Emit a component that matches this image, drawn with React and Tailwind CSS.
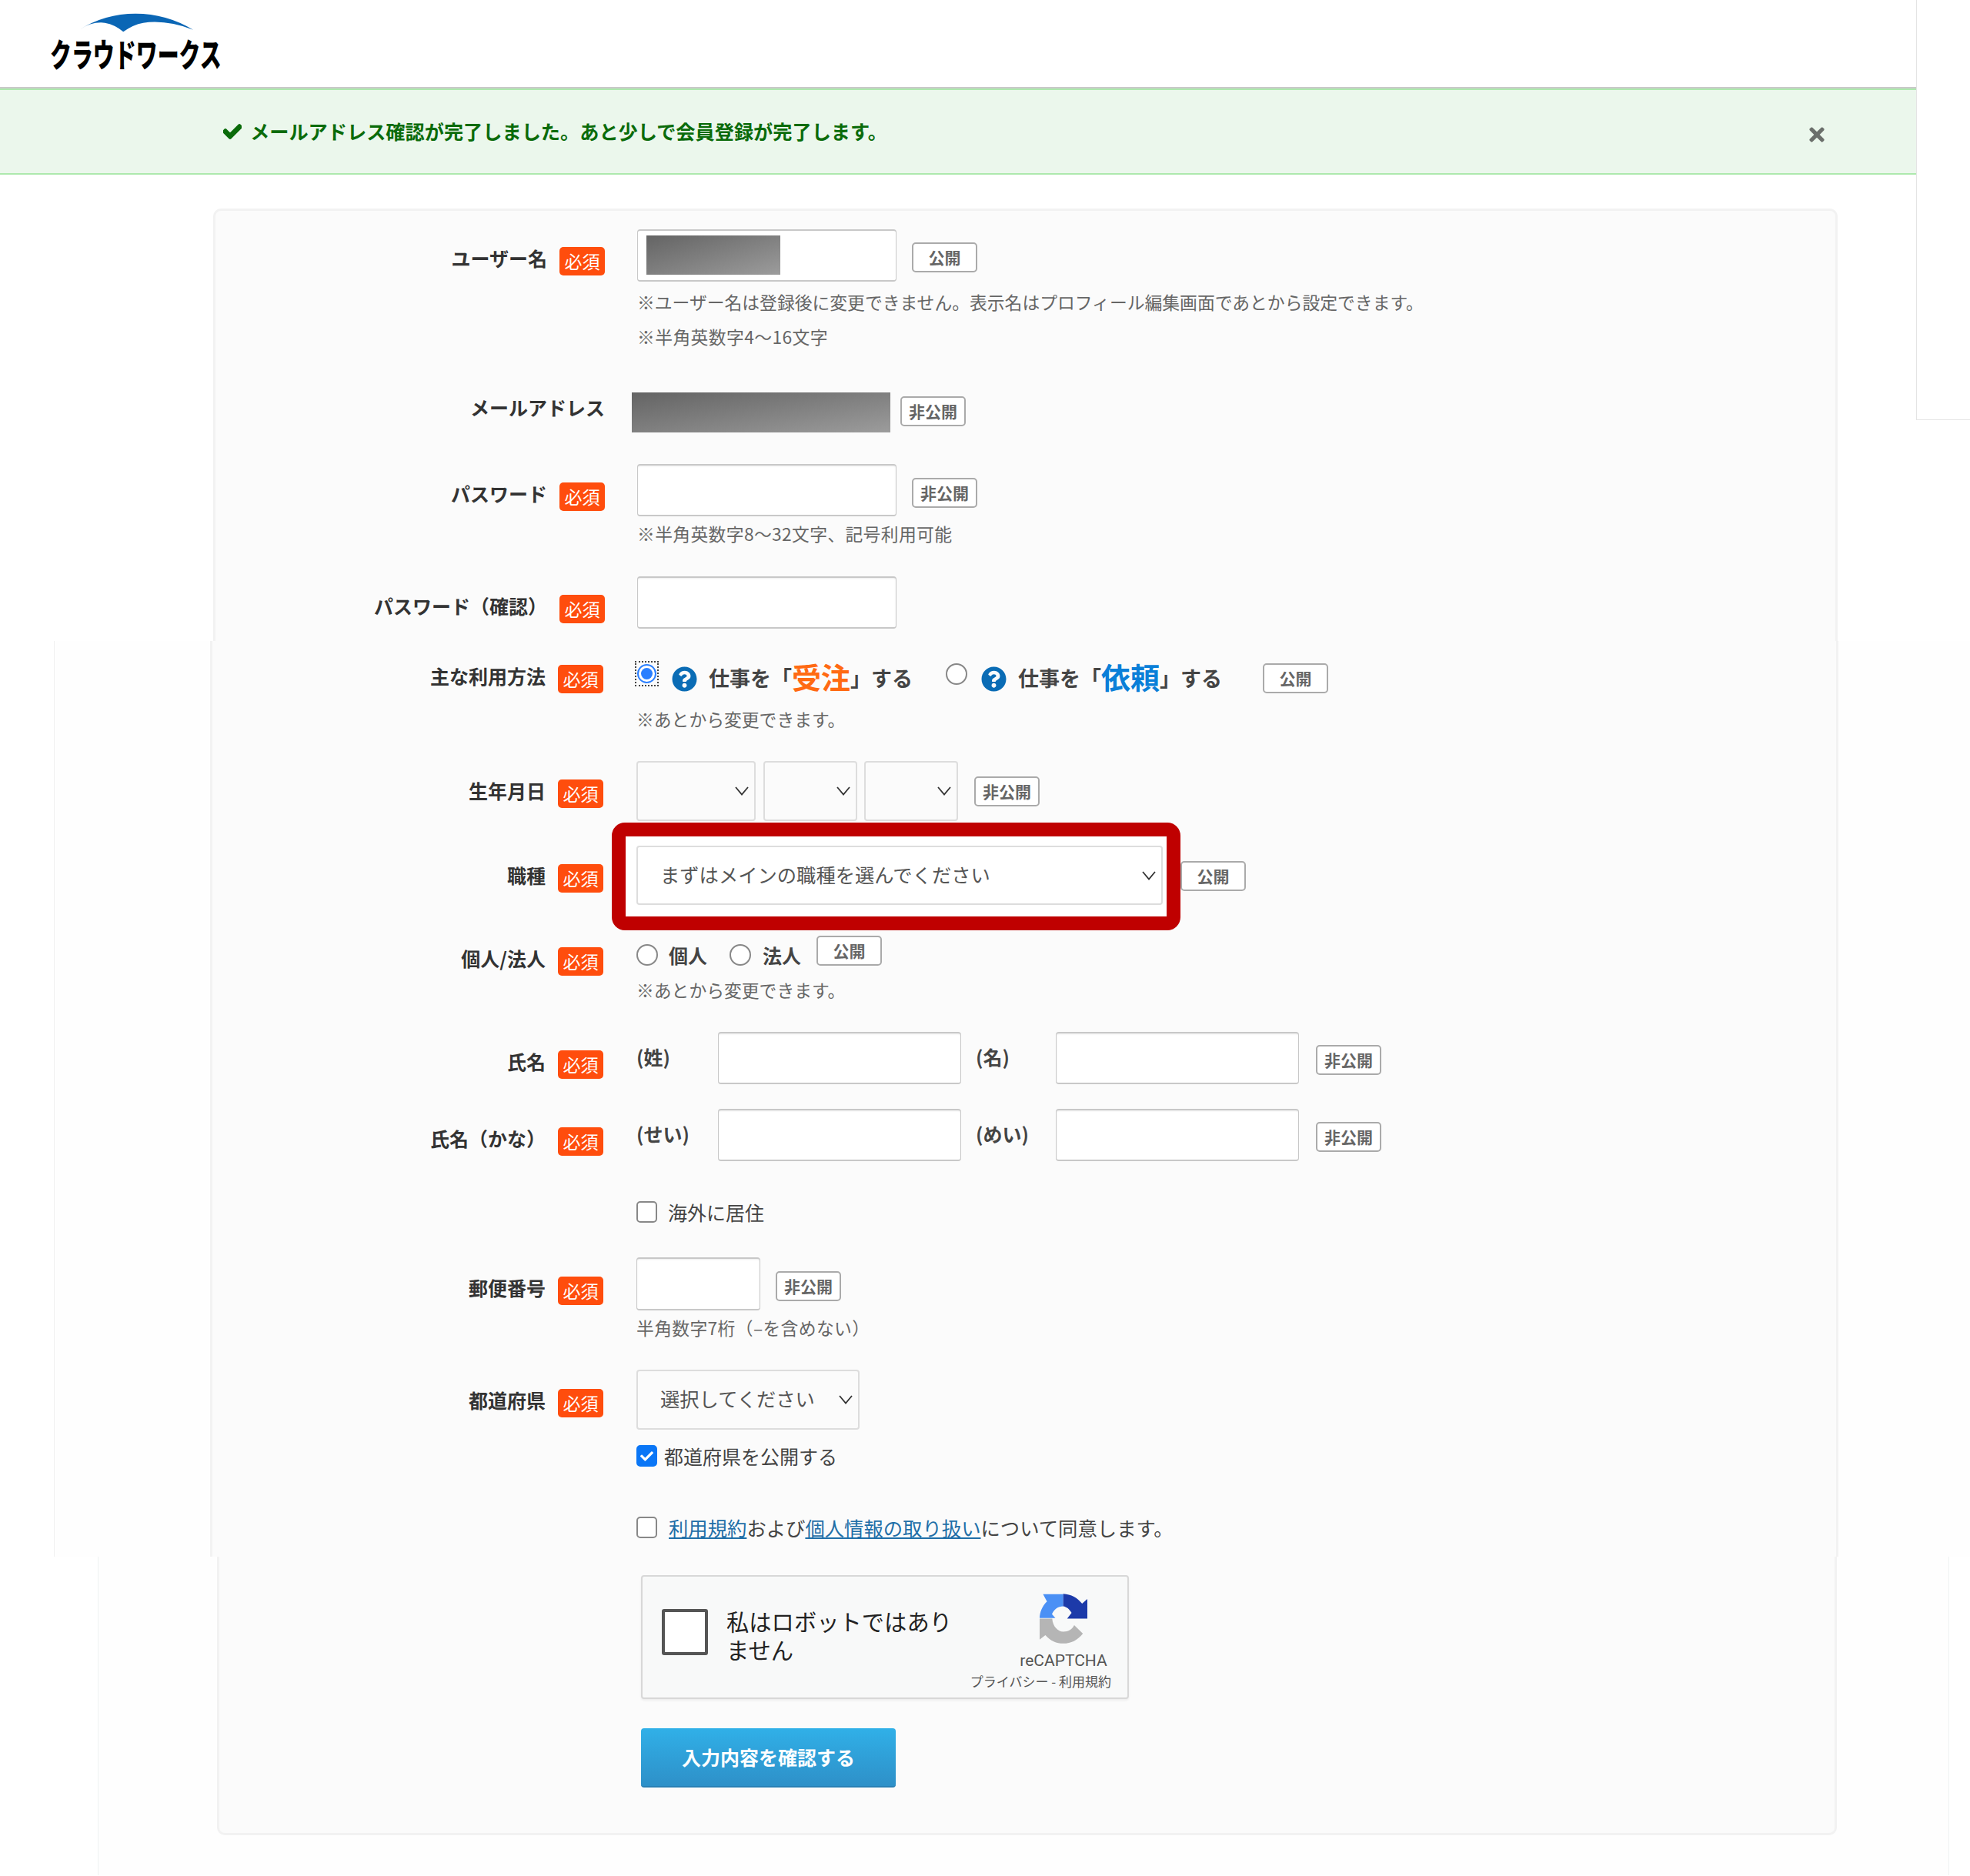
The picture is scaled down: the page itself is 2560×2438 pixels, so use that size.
import React from 'react';
import { FaCheck, FaTimes, FaQuestionCircle } from 'react-icons/fa';

const Badge = () => (
    <span className="flex h-[37px] w-[59px] shrink-0 items-center justify-center rounded-[5px] bg-[#ff4d0d] text-[23px] text-white">
        必須
    </span>
);

const Row = ({ label, required = true, labelTop = '', col = 'w-[508px] mr-[43px]', className = '', children }) => (
    <div className={`flex items-start ${className}`}>
        <div className={`flex shrink-0 items-start justify-end gap-[16px] ${col} ${labelTop}`}>
            {label && <span className="-mt-[4px] whitespace-nowrap text-[25px] font-bold leading-[37px] text-[#333]">{label}</span>}
            {required && <Badge />}
        </div>
        {children}
    </div>
);

const Visibility = ({ text = '非公開', className = '' }) => (
    <span className={`flex h-[39px] w-[85px] shrink-0 items-center justify-center rounded-[5px] border-2 border-[#aaa] bg-white text-[21px] font-bold text-[#666] ${className}`}>
        {text}
    </span>
);

const Note = ({ children, className = '' }) => (
    <p className={`whitespace-nowrap pb-[3px] text-[22.8px] leading-[42px] text-[#666] ${className}`}>{children}</p>
);

const TextBox = ({ className = '' }) => (
    <input
        type="text"
        className={`h-[68px] rounded-[4px] border border-y-2 border-[#c8c8c8] bg-white shadow-[inset_0_1px_2px_rgba(0,0,0,0.08)] ${className}`}
    />
);

const Chevron = () => (
    <svg width="18" height="12" viewBox="0 0 18 12" className="shrink-0" fill="none" stroke="#333" strokeWidth="1.8">
        <polyline points="1,1 9,10.5 17,1" />
    </svg>
);

const SelectBox = ({ text, className = '' }) => (
    <div className={`flex h-[78px] items-center justify-between rounded-[4px] border-2 border-[#ddd] pl-[29px] pr-[7px] text-[25.3px] text-[#555] ${className}`}>
        <span className="whitespace-nowrap pb-[2px]">{text}</span>
        <Chevron />
    </div>
);

const Radio = ({ className = '' }) => (
    <span className={`block h-[28px] w-[28px] shrink-0 rounded-full border-2 border-[#888] bg-white ${className}`} />
);

const Checkbox = ({ checked = false, className = '' }) => (
    <span
        className={`flex h-[28px] w-[27px] shrink-0 items-center justify-center rounded-[5px] border-2 ${
            checked ? 'border-[#0a76f6] bg-[#0a76f6]' : 'border-[#888] bg-white'
        } ${className}`}
    >
        {checked && <FaCheck className="text-[17px] text-white" />}
    </span>
);

const BoldText = ({ children, className = '' }) => (
    <span className={`whitespace-nowrap text-[25px] font-bold leading-[26px] text-[#444] ${className}`}>{children}</span>
);

const UsageText = ({ word, color }) => (
    <span className="flex h-[48px] items-center whitespace-nowrap pb-[3px] text-[27px] font-bold text-[#444]">
        仕事を「
        <span className={`pb-[5px] text-[38px] leading-[40px] ${color}`}>{word}</span>
        」する
    </span>
);

const NameFields = ({ first, second }) => (
    <div className="flex items-start">
        <span className="flex h-[68px] w-[106px] items-center pb-[3px] text-[25px] font-bold text-[#444]">{first}</span>
        <TextBox className="w-[316px]" />
        <span className="ml-[19px] flex h-[68px] w-[104px] items-center pb-[3px] text-[25px] font-bold text-[#444]">{second}</span>
        <TextBox className="w-[316px]" />
        <Visibility className="ml-[22px] mt-[17px]" />
    </div>
);

const Masked = ({ className = '' }) => (
    <div className={`bg-gradient-to-br from-[#646464] to-[#9c9c9c] ${className}`} />
);

const RecaptchaLogo = () => (
    <svg width="63" height="65" viewBox="100 40 185 190">
        <path fill="#4a90f5" d="M100 135C100 110 110 88 128 70L113 42H190V88C170 88 155 100 147 118L160 133H100Z" />
        <path fill="#1c3aa9" d="M190 40C220 42 245 55 262 78L282 60V135H205L222 113C213 98 203 90 190 88Z" />
        <path fill="#b5b5b5" d="M100 135H148C150 165 170 185 190 185C210 185 225 175 232 160L265 192C245 217 220 230 190 230C165 230 140 220 122 198L100 215Z" />
    </svg>
);

const Logo = () => (
    <div className="ml-[65px] w-[223px] pt-[17px]">
        <svg width="148" height="25" viewBox="190 50 445 75" className="ml-[38px] block">
            <path
                fill="#0a66b5"
                d="M190 115Q290 52 410 52Q530 52 635 115Q530 75 440 88Q400 95 362 123Q330 95 290 88Q240 82 190 115Z"
            />
        </svg>
        <div className="mt-[2px] origin-left scale-x-[0.665] whitespace-nowrap text-[42px] font-black leading-[50px] text-black">
            クラウドワークス
        </div>
    </div>
);

const App = () => {
    const colA = 'w-[506px] mr-[42px]';

    return (
        <div className="relative min-h-[2438px] overflow-hidden bg-white font-['Noto_Sans_CJK_JP','Noto_Sans',sans-serif]">
            <div className="absolute left-[2490px] top-0 h-[546px] w-[70px] border-b border-l border-[#e4e4e4]" />

            <header className="h-[115px] w-[2490px] border-b-2 border-[#c9c9c9]">
                <Logo />
            </header>

            <div className="flex h-[112px] w-[2490px] items-center justify-between border-y-2 border-[#ade9ad] bg-[#ebf7ec] pl-[290px] pr-[115px]">
                <div className="flex items-center gap-[11px] text-[25.2px] font-bold text-[#0a6b0a]">
                    <FaCheck className="stroke-[40] text-[24px]" />
                    <span className="whitespace-nowrap">メールアドレス確認が完了しました。あと少しで会員登録が完了します。</span>
                </div>
                <FaTimes className="mt-[8px] text-[28px] text-[#6b6f6b]" />
            </div>

            <section className="pt-[44px]">
                <div className="ml-[277px] h-[562px] w-[2111px] rounded-t-[10px] border-x-[3px] border-t-[3px] border-[#f2f2f2] bg-[#fbfbfb] pt-[24px]">
                    <Row label="ユーザー名" col={colA} labelTop="pt-[23px]">
                        <div>
                            <div className="flex items-start">
                                <div className="h-[68px] w-[337px] rounded-[4px] border border-y-2 border-[#c8c8c8] bg-white pl-[11px] pt-[6px]">
                                    <Masked className="h-[51px] w-[174px]" />
                                </div>
                                <Visibility text="公開" className="ml-[20px] mt-[17px]" />
                            </div>
                            <Note className="mt-[6px]">※ユーザー名は登録後に変更できません。表示名はプロフィール編集画面であとから設定できます。</Note>
                            <Note className="tracking-[0.4px]">※半角英数字4〜16文字</Note>
                        </div>
                    </Row>

                    <Row label="メールアドレス" required={false} col={colA} labelTop="pt-[5px]" className="mt-[48px]">
                        <div className="-ml-[7px] flex items-start">
                            <Masked className="h-[52px] w-[336px]" />
                            <Visibility className="ml-[13px] mt-[5px]" />
                        </div>
                    </Row>

                    <Row label="パスワード" col={colA} labelTop="pt-[24px]" className="mt-[41px]">
                        <div>
                            <div className="flex items-start">
                                <TextBox className="w-[337px]" />
                                <Visibility className="ml-[20px] mt-[18px]" />
                            </div>
                            <Note className="mt-[2px] tracking-[0.35px]">※半角英数字8〜32文字、記号利用可能</Note>
                        </div>
                    </Row>

                    <Row label="パスワード（確認）" col={colA} labelTop="pt-[24px]" className="mt-[31px]">
                        <TextBox className="w-[337px]" />
                    </Row>
                </div>
            </section>

            <section className="ml-[70px] border-l border-[#f0f0f0] bg-[#fefefe] pl-[202px]">
                <div className="w-[2116px] border-x-[3px] border-[#f2f2f2] bg-[#fbfbfb] pb-[24px] pt-[26px]">
                    <Row label="主な利用方法" labelTop="pt-[5px]">
                        <div>
                            <div className="-ml-[2px] flex items-start">
                                <span className="flex h-[33px] w-[31px] shrink-0 items-center justify-center border-2 border-dotted border-[#444]">
                                    <span className="flex h-[25px] w-[25px] items-center justify-center rounded-full border-2 border-[#2a7fff] bg-white">
                                        <span className="h-[15px] w-[15px] rounded-full bg-[#2a7fff]" />
                                    </span>
                                </span>
                                <FaQuestionCircle className="ml-[17px] mr-[15px] mt-[7px] shrink-0 text-[33px] text-[#0a6cb5]" />
                                <UsageText word="受注" color="text-[#ff6a13]" />
                                <Radio className="ml-[43px] mt-[3px]" />
                                <FaQuestionCircle className="ml-[18px] mr-[15px] mt-[7px] shrink-0 text-[33px] text-[#0a6cb5]" />
                                <UsageText word="依頼" color="text-[#0a7fd8]" />
                                <Visibility text="公開" className="ml-[53px] mt-[3px]" />
                            </div>
                            <Note className="mt-[7px]">※あとから変更できます。</Note>
                        </div>
                    </Row>

                    <Row label="生年月日" labelTop="pt-[24px]" className="mt-[30px]">
                        <div className="flex items-start">
                            <SelectBox className="w-[155px]" />
                            <SelectBox className="ml-[10px] w-[122px]" />
                            <SelectBox className="ml-[9px] w-[122px]" />
                            <Visibility className="ml-[21px] mt-[20px]" />
                        </div>
                    </Row>

                    <Row label="職種" labelTop="pt-[54px]" className="mt-[2px]">
                        <div className="-ml-[32px] flex items-start">
                            <div className="w-[739px] rounded-[17px] border-[18px] border-[#bf0000] bg-white pb-[15px] pl-[14px] pr-[5px] pt-[12px]">
                                <SelectBox text="まずはメインの職種を選んでください" className="!h-[77px] bg-white" />
                            </div>
                            <Visibility text="公開" className="mt-[50px]" />
                        </div>
                    </Row>

                    <Row label="個人/法人" labelTop="pt-[15px]" className="mt-[7px]">
                        <div>
                            <div className="flex items-start">
                                <Radio className="mt-[11px]" />
                                <BoldText className="ml-[14px] mt-[12px]">個人</BoldText>
                                <Radio className="ml-[29px] mt-[11px]" />
                                <BoldText className="ml-[15px] mt-[12px]">法人</BoldText>
                                <Visibility text="公開" className="ml-[20px]" />
                            </div>
                            <Note className="mt-[11px]">※あとから変更できます。</Note>
                        </div>
                    </Row>

                    <Row label="氏名" labelTop="pt-[24px]" className="mt-[30px]">
                        <NameFields first="(姓)" second="(名)" />
                    </Row>

                    <Row label="氏名（かな）" labelTop="pt-[24px]" className="mt-[32px]">
                        <NameFields first="(せい)" second="(めい)" />
                    </Row>

                    <Row required={false} className="mt-[52px]">
                        <div className="flex items-center">
                            <Checkbox />
                            <span className="ml-[14px] text-[25px] leading-[28px] text-[#444]">海外に居住</span>
                        </div>
                    </Row>

                    <Row label="郵便番号" labelTop="pt-[25px]" className="mt-[45px]">
                        <div>
                            <div className="flex items-start">
                                <TextBox className="!h-[69px] w-[161px]" />
                                <Visibility className="ml-[20px] mt-[18px]" />
                            </div>
                            <Note className="mt-[2px] tracking-[0.35px]">半角数字7桁（–を含めない）</Note>
                        </div>
                    </Row>

                    <Row label="都道府県" labelTop="pt-[25px]" className="mt-[30px]">
                        <div>
                            <SelectBox text="選択してください" className="w-[290px]" />
                            <div className="mt-[20px] flex items-center">
                                <Checkbox checked />
                                <span className="ml-[9px] text-[25px] leading-[28px] text-[#444]">都道府県を公開する</span>
                            </div>
                        </div>
                    </Row>

                    <Row required={false} className="mt-[65px]">
                        <div className="flex items-center">
                            <Checkbox />
                            <span className="ml-[15px] whitespace-nowrap text-[25.35px] leading-[28px] text-[#444]">
                                <a href="#" className="text-[#1f6fa8] underline">利用規約</a>
                                および
                                <a href="#" className="text-[#1f6fa8] underline">個人情報の取り扱い</a>
                                について同意します。
                            </span>
                        </div>
                    </Row>
                </div>
            </section>

            <section className="ml-[127px] h-[414px] w-[2406px] border-x border-[#eef2f2] bg-[#fefefe] pl-[154px]">
                <div className="h-[362px] w-[2105px] rounded-b-[10px] border-x-[3px] border-b-[3px] border-[#f2f2f2] bg-[#fbfbfb] pl-[548px] pt-[24px]">
                    <div className="flex h-[161px] w-[634px] items-start rounded-[4px] border-2 border-[#d8d8d8] bg-[#f8f9f9] pl-[25px] pt-[42px] shadow-[0_2px_3px_rgba(0,0,0,0.06)]">
                        <span className="h-[60px] w-[60px] shrink-0 rounded-[3px] border-[4px] border-[#555] bg-white" />
                        <span className="-mt-[3px] ml-[24px] w-[300px] text-[29.3px] leading-[37px] text-[#222]">私はロボットではありません</span>
                        <div className="-mt-[20px] ml-auto mr-[21px] flex w-[190px] flex-col items-end">
                            <div className="flex w-full flex-col items-center pl-[66px]">
                                <RecaptchaLogo />
                                <span className="mt-[9px] font-['Roboto',sans-serif] text-[21px] leading-[26px] text-[#555]">reCAPTCHA</span>
                            </div>
                            <span className="mt-[2px] whitespace-nowrap text-[17px] leading-[24px] text-[#555]">プライバシー - 利用規約</span>
                        </div>
                    </div>
                    <button className="mt-[38px] flex h-[77px] w-[331px] items-center justify-center rounded-[4px] border-b-2 border-[#2a80b4] bg-gradient-to-b from-[#30b0e8] to-[#2e90c8] text-[25px] font-bold text-white">
                        入力内容を確認する
                    </button>
                </div>
            </section>
        </div>
    );
};

export default App;
